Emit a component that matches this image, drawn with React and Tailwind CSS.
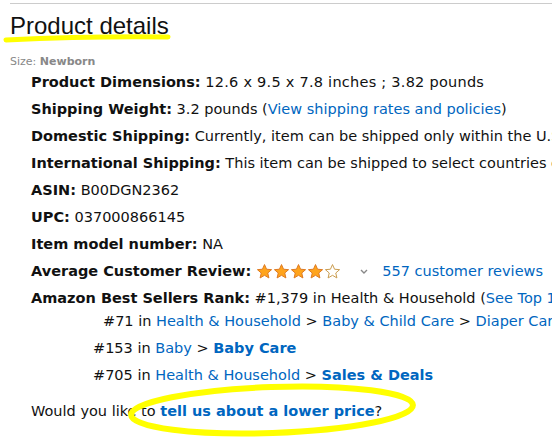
import React from 'react';

const Star = ({ filled }) => (
  <svg width="17" height="17" viewBox="0 0 24 24">
    <path
      d="M12 2.2l2.9 6.6 7.1.6-5.4 4.7 1.6 7-6.2-3.7-6.2 3.7 1.6-7L2 9.4l7.1-.6z"
      fill={filled ? '#ffa41c' : '#fff'}
      stroke={filled ? '#de7921' : '#c89b4d'}
      strokeWidth="1.4"
      strokeLinejoin="round"
    />
  </svg>
);

const Row = ({ label, children, className = '' }) => (
  <li className={`h-[27px] flex items-center ${className}`}>
    <span className="font-bold">{label}:</span>&nbsp;{children}
  </li>
);

const Link = ({ children, bold }) => (
  <span className={`text-[#0066c0] ${bold ? 'font-bold' : ''}`}>{children}</span>
);

export default function App() {
  return (
    <div className="relative w-[552px] h-[437px] overflow-hidden bg-white text-[#111] whitespace-nowrap" style={{ fontFamily: '"DejaVu Sans", Verdana, sans-serif' }}>
      <div className="ml-[10px] mt-[3px] border-t border-[#ccc]" />
      <h2 className="ml-[10px] mt-[7px] h-[30px] text-[24px] leading-[30px] text-[#111]" style={{ fontFamily: '"Liberation Sans", Arial, sans-serif' }}>
        Product details
      </h2>
      <div className="ml-[10px] mt-[14px] text-[11px] leading-[14px] text-[#888]">
        Size: <span className="font-bold">Newborn</span>
      </div>
      <ul className="ml-[31px] text-[14.5px]">
        <Row label="Product Dimensions">
          <span className="tracking-[0.25px]">12.6 x 9.5 x 7.8 inches ; 3.82 pounds</span>
        </Row>
        <Row label="Shipping Weight">3.2 pounds (<Link>View shipping rates and policies</Link>)</Row>
        <Row label="Domestic Shipping">Currently, item can be shipped only within the U.S. and to APO/FPO addresses.</Row>
        <Row label="International Shipping">This item can be shipped to select countries outside of the U.S.</Row>
        <Row label="ASIN">B00DGN2362</Row>
        <Row label="UPC">037000866145</Row>
        <Row label="Item model number">NA</Row>
        <li className="h-[27px] flex items-center">
          <span className="font-bold">Average Customer Review:</span>
          <span className="ml-[5px] flex items-center">
            <Star filled /><Star filled /><Star filled /><Star filled /><Star />
          </span>
          <svg className="ml-[18px]" width="10" height="8" viewBox="0 0 10 8">
            <path d="M2 2l3 3 3-3" fill="none" stroke="#888" strokeWidth="1.4" />
          </svg>
          <span className="ml-[13px]"><Link>557 customer reviews</Link></span>
        </li>
        <li>
          <div className="h-[27px] flex items-center">
            <span className="font-bold">Amazon Best Sellers Rank:</span>&nbsp;#1,379 in Health &amp; Household (<Link>See Top 100 in Health &amp; Household</Link>)
          </div>
          <ul className="ml-[62px] -mt-[4px]">
            <li className="h-[27px] flex items-center ml-[10px]">#71 in&nbsp;<Link>Health &amp; Household</Link>&nbsp;&gt;&nbsp;<Link>Baby &amp; Child Care</Link>&nbsp;&gt;&nbsp;<Link>Diaper Care</Link></li>
            <li className="h-[27px] flex items-center">#153 in&nbsp;<Link>Baby</Link>&nbsp;&gt;&nbsp;<Link bold>Baby Care</Link></li>
            <li className="h-[27px] flex items-center">#705 in&nbsp;<Link>Health &amp; Household</Link>&nbsp;&gt;&nbsp;<Link bold>Sales &amp; Deals</Link></li>
          </ul>
        </li>
      </ul>
      <div className="ml-[31px] mt-[9px] h-[27px] flex items-center text-[14.5px]">
        Would you like to&nbsp;<Link bold>tell us about a lower price</Link>?
      </div>

      <svg className="absolute left-0 top-0 pointer-events-none" width="552" height="437">
        <path d="M6 40 Q 90 36 168 37" fill="none" stroke="#ffff00" strokeWidth="5" strokeLinecap="round" />
        <ellipse cx="272" cy="410" rx="141" ry="23" fill="none" stroke="#ffff00" strokeWidth="6" transform="rotate(-2 272 410)" />
      </svg>
    </div>
  );
}
